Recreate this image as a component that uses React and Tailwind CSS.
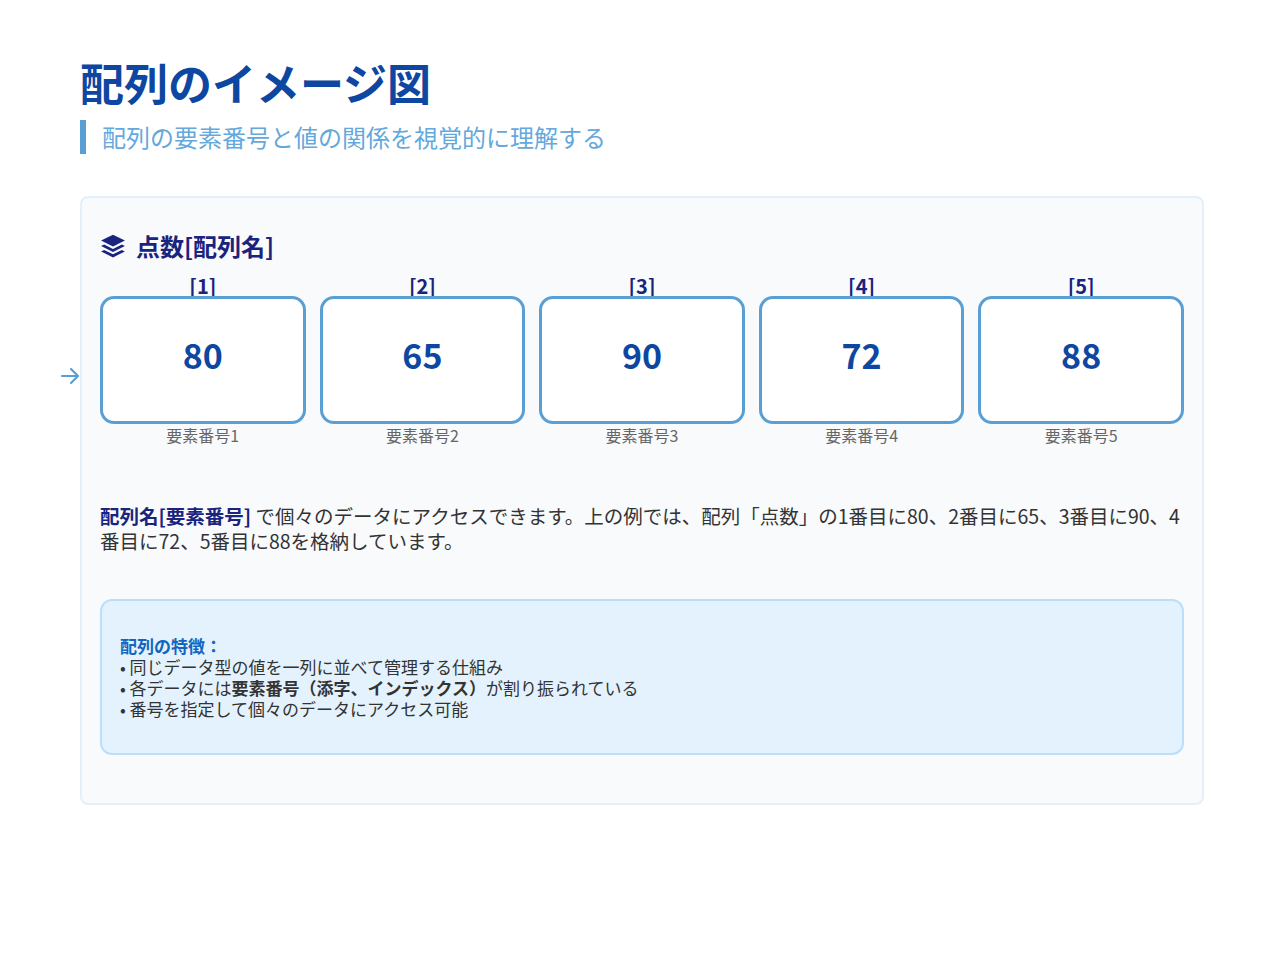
const items = [
  { i: 1, v: 80 },
  { i: 2, v: 65 },
  { i: 3, v: 90 },
  { i: 4, v: 72 },
  { i: 5, v: 88 },
];

export default function App() {
  return (
    <div className="min-h-[960px] bg-white px-20 pt-[54px]" style={{ fontFamily: '"Noto Sans CJK JP", "Noto Sans", sans-serif' }}>
      <h1 className="text-[44px] font-bold leading-[56px] text-[#0d47a1]">配列のイメージ図</h1>
      <div className="mt-[10px] border-l-[6px] border-[#5a9fd4] pl-4 text-[24px] leading-[34px] text-[#64a8dc]">
        配列の要素番号と値の関係を視覚的に理解する
      </div>

      <div className="mt-[42px] w-[1124px] rounded-lg border-2 border-[#e3f0fb] bg-[#f8fafc] px-[18px] pb-[48px] pt-[30px]">
        <div className="flex items-center gap-2.5 text-[24px] font-bold text-[#1a237e]">
          <svg width="26" height="26" viewBox="0 0 24 24" fill="#1a237e">
            <path d="M12 1.5 1 7l11 5.5L23 7z" />
            <path d="M3.8 10.6 1 12l11 5.5L23 12l-2.8-1.4L12 14.7z" />
            <path d="M3.8 15.6 1 17l11 5.5L23 17l-2.8-1.4L12 19.7z" />
          </svg>
          点数[配列名]
        </div>

        <div className="relative mt-[12px] flex gap-[14px]">
          <svg className="absolute left-[-42px] top-[88px]" width="24" height="24" viewBox="0 0 24 24" fill="none" stroke="#5a9fd4" strokeWidth="2.2" strokeLinecap="round" strokeLinejoin="round">
            <path d="M4 12h16M13 5l7 7-7 7" />
          </svg>
          {items.map((it) => (
            <div key={it.i} className="flex w-[206px] flex-col items-center">
              <div className="text-[20px] font-bold leading-[20px] text-[#1a237e]">[{it.i}]</div>
              <div className="flex h-[128px] w-full items-center justify-center rounded-[14px] border-[3px] border-[#5a9fd4] bg-white pb-3 text-[34px] font-bold text-[#0d47a1]">
                {it.v}
              </div>
              <div className="mt-[1px] text-[16px] leading-[20px] text-[#666]">要素番号{it.i}</div>
            </div>
          ))}
        </div>

        <p className="mt-[58px] text-[19.5px] leading-[25px] text-[#333]">
          <span className="font-bold text-[#1a237e]">配列名[要素番号]</span> で個々のデータにアクセスできます。上の例では、配列「点数」の1番目に80、2番目に65、3番目に90、4番目に72、5番目に88を格納しています。
        </p>

        <div className="mt-[46px] rounded-xl border-2 border-[#bbdefb] bg-[#e3f2fd] px-[18px] py-[34px] text-[17px] leading-[21px] text-[#333]">
          <div className="font-bold text-[#1565c0]">配列の特徴：</div>
          <div>• 同じデータ型の値を一列に並べて管理する仕組み</div>
          <div>• 各データには<span className="font-bold">要素番号（添字、インデックス）</span>が割り振られている</div>
          <div>• 番号を指定して個々のデータにアクセス可能</div>
        </div>
      </div>
    </div>
  );
}
